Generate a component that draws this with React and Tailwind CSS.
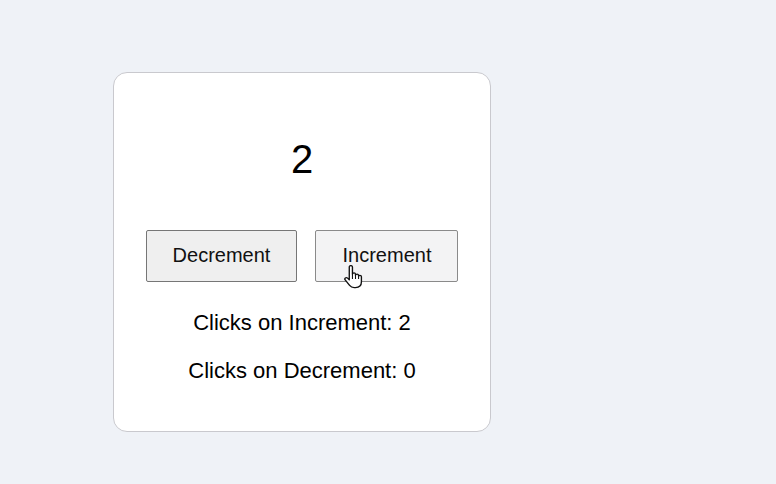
import React from "react";

function HandCursor() {
  return (
    <svg className="absolute left-[344px] top-[265px]" width="19" height="24" viewBox="0 0 18 25" preserveAspectRatio="none">
      <path
        d="M5 2.2C5 1.2 5.7.6 6.5.6S8 1.2 8 2.2V9.5c.2-.9.8-1.3 1.5-1.3s1.3.5 1.4 1.4v1c.2-.8.8-1.2 1.5-1.2s1.3.5 1.4 1.4v1c.2-.6.7-1 1.3-1 .8 0 1.4.6 1.4 1.5v5.2c0 3.6-2.2 6-5.6 6H9.6c-2 0-3.2-.8-4.3-2.3L1.1 15.6c-.5-.8-.4-1.6.2-2.1.7-.5 1.5-.4 2.1.2L5 15.4V2.2Z"
        fill="#ffffff"
        stroke="#111111"
        strokeWidth="1.3"
        strokeLinejoin="round"
      />
      <path d="M8 9.5v5M10.9 10.5v4M13.8 11.6v3" fill="none" stroke="#111111" strokeWidth="1" />
    </svg>
  );
}

export default function App() {
  return (
    <div className="relative min-h-[484px] bg-[#eff2f7] pl-[113px] pt-[72px] font-['Liberation_Sans',Arial,sans-serif] text-black overflow-hidden">
      <div className="flex h-[360px] w-[378px] flex-col items-center rounded-[14px] border border-[#c9c9ce] bg-white pt-[63px]">
        <div className="text-[40px] leading-[46px]">2</div>
        <div className="mt-[48px] flex gap-[18px]">
          <button className="h-[52px] w-[151px] rounded-[2px] border border-[#767676] bg-[#efefef] pb-[2px] text-[20px] text-[#111111]">
            Decrement
          </button>
          <button className="h-[52px] w-[143px] rounded-[2px] border border-[#8a8a8a] bg-[#f3f3f4] pb-[2px] pl-[1px] text-[20px] text-[#111111]">
            Increment
          </button>
        </div>
        <p className="mt-[28px] text-[22px] leading-[25px]">Clicks on Increment: 2</p>
        <p className="mt-[23px] text-[22px] leading-[25px]">Clicks on Decrement: 0</p>
      </div>
      <HandCursor />
    </div>
  );
}
